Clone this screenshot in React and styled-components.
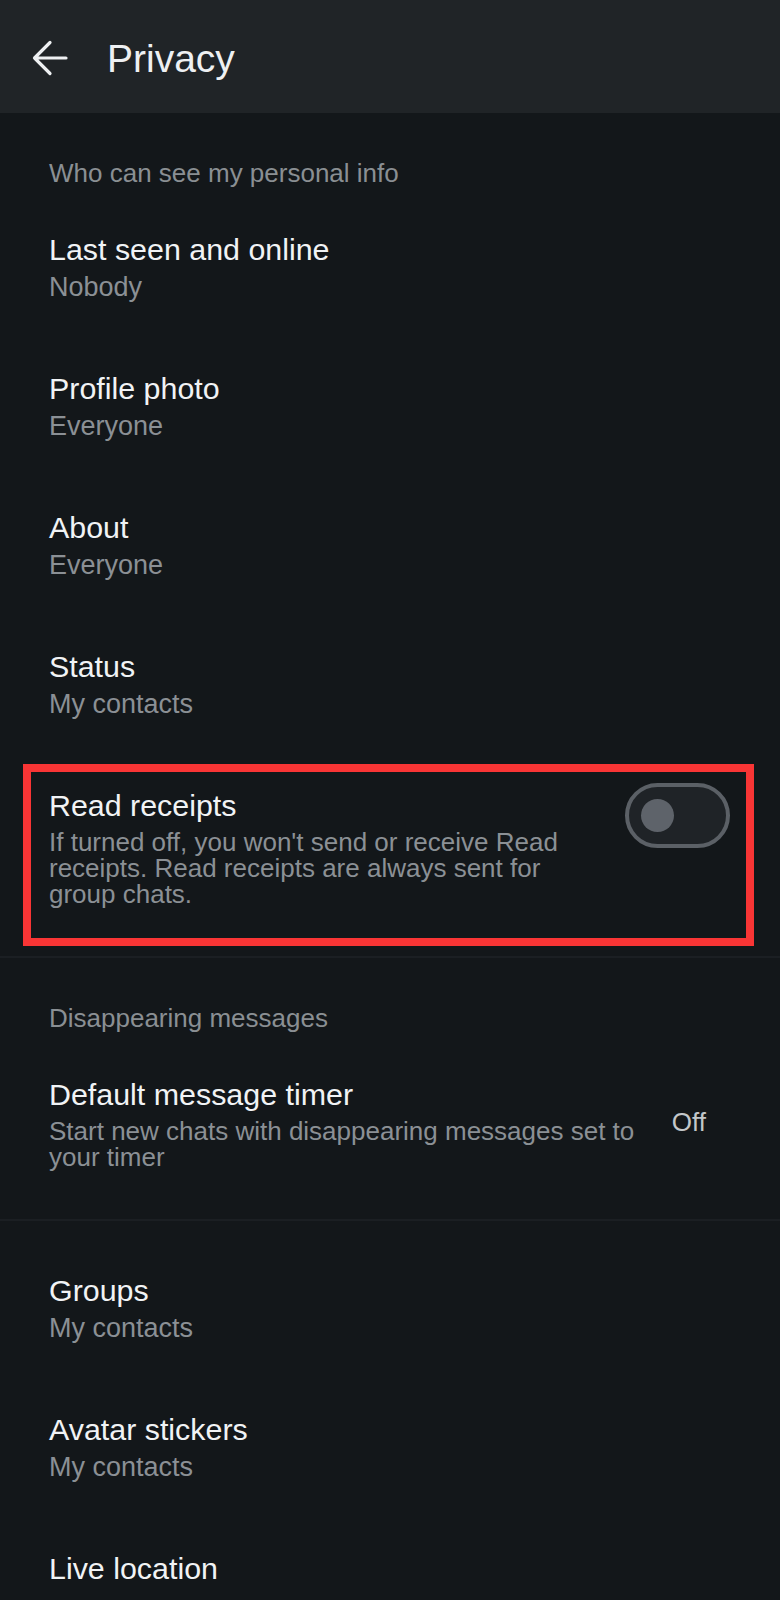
import React from "react";
import styled, { createGlobalStyle } from "styled-components";

const GlobalStyle = createGlobalStyle`
  html, body {
    margin: 0;
    padding: 0;
    background: #13171a;
  }
  body {
    font-family: "Liberation Sans", Arial, Helvetica, sans-serif;
    -webkit-font-smoothing: antialiased;
  }
  * { box-sizing: border-box; }
`;

const Page = styled.div`
  width: 780px;
  height: 1600px;
  background: #13171a;
  overflow: hidden;
`;

const Header = styled.header`
  height: 113px;
  background: #202427;
  display: flex;
  align-items: center;
  padding: 3px 0 0 32px;
  gap: 39px;
`;

const BackButton = styled.button`
  display: flex;
  align-items: center;
  justify-content: center;
  width: 36px;
  height: 36px;
  padding: 0;
  border: none;
  background: transparent;
  color: #eef0f2;
  cursor: pointer;
`;

const HeaderTitle = styled.h1`
  margin: 0;
  font-size: 39px;
  line-height: 39px;
  font-weight: 400;
  color: #eef0f2;
`;

const Section = styled.section`
  padding: 18px 0;
  border-bottom: ${(p) => (p.$divider ? "2px solid #1b1f23" : "none")};
`;

const SectionLabel = styled.div`
  padding: 27px 49px 10px;
  font-size: 26px;
  line-height: 30px;
  color: #8a8f93;
`;

const Row = styled.div`
  position: relative;
  display: flex;
  align-items: ${(p) => p.$align || "flex-start"};
  gap: 24px;
  padding: 31.5px ${(p) => p.$right || 50}px 31.5px 49px;
`;

const TextCol = styled.div`
  flex: 1;
  min-width: 0;
  display: flex;
  flex-direction: column;
`;

const Title = styled.div`
  font-size: 30.4px;
  line-height: 38px;
  color: #f1f3f5;
`;

const Subtitle = styled.div`
  font-size: 27px;
  line-height: 38px;
  color: #8b9095;
`;

const Description = styled.div`
  margin-top: 5px;
  font-size: 26px;
  line-height: 26px;
  color: #8b9095;
`;

const Value = styled.div`
  font-size: 26px;
  line-height: 30px;
  color: #c3c7ca;
  flex-shrink: 0;
`;

const Highlight = styled.div`
  position: absolute;
  top: 10px;
  bottom: -8px;
  left: 23px;
  right: 26px;
  border: 8px solid #f93535;
  pointer-events: none;
`;

const Switch = styled.div`
  position: relative;
  flex-shrink: 0;
  width: 105px;
  height: 65px;
  margin-top: -3px;
  border-radius: 33px;
  border: 4px solid #5b6066;
  background: #1f2327;
  display: flex;
  align-items: center;
  padding-left: 12px;
`;

const Knob = styled.div`
  width: 33px;
  height: 33px;
  border-radius: 50%;
  background: #5e636a;
`;

const BackArrow = () => (
  <svg width="36" height="36" viewBox="0 0 36 36" fill="none">
    <path
      d="M2.5 18H34M18 2.5L2.5 18L18 33.5"
      stroke="currentColor"
      strokeWidth="3.2"
      strokeLinecap="round"
      strokeLinejoin="round"
    />
  </svg>
);

const SimpleRow = ({ title, value }) => (
  <Row>
    <TextCol>
      <Title>{title}</Title>
      {value && <Subtitle>{value}</Subtitle>}
    </TextCol>
  </Row>
);

export default function App() {
  return (
    <>
      <GlobalStyle />
      <Page>
        <Header>
          <BackButton aria-label="Back">
            <BackArrow />
          </BackButton>
          <HeaderTitle>Privacy</HeaderTitle>
        </Header>

        <Section $divider>
          <SectionLabel>Who can see my personal info</SectionLabel>
          <SimpleRow title="Last seen and online" value="Nobody" />
          <SimpleRow title="Profile photo" value="Everyone" />
          <SimpleRow title="About" value="Everyone" />
          <SimpleRow title="Status" value="My contacts" />
          <Row>
            <TextCol>
              <Title>Read receipts</Title>
              <Description>
                If turned off, you won't send or receive Read receipts. Read
                receipts are always sent for group chats.
              </Description>
            </TextCol>
            <Switch role="switch" aria-checked="false">
              <Knob />
            </Switch>
            <Highlight />
          </Row>
        </Section>

        <Section $divider>
          <SectionLabel>Disappearing messages</SectionLabel>
          <Row $align="center" $right={74}>
            <TextCol>
              <Title>Default message timer</Title>
              <Description>
                Start new chats with disappearing messages set to your timer
              </Description>
            </TextCol>
            <Value>Off</Value>
          </Row>
        </Section>

        <Section>
          <SimpleRow title="Groups" value="My contacts" />
          <SimpleRow title="Avatar stickers" value="My contacts" />
          <SimpleRow title="Live location" />
        </Section>
      </Page>
    </>
  );
}
